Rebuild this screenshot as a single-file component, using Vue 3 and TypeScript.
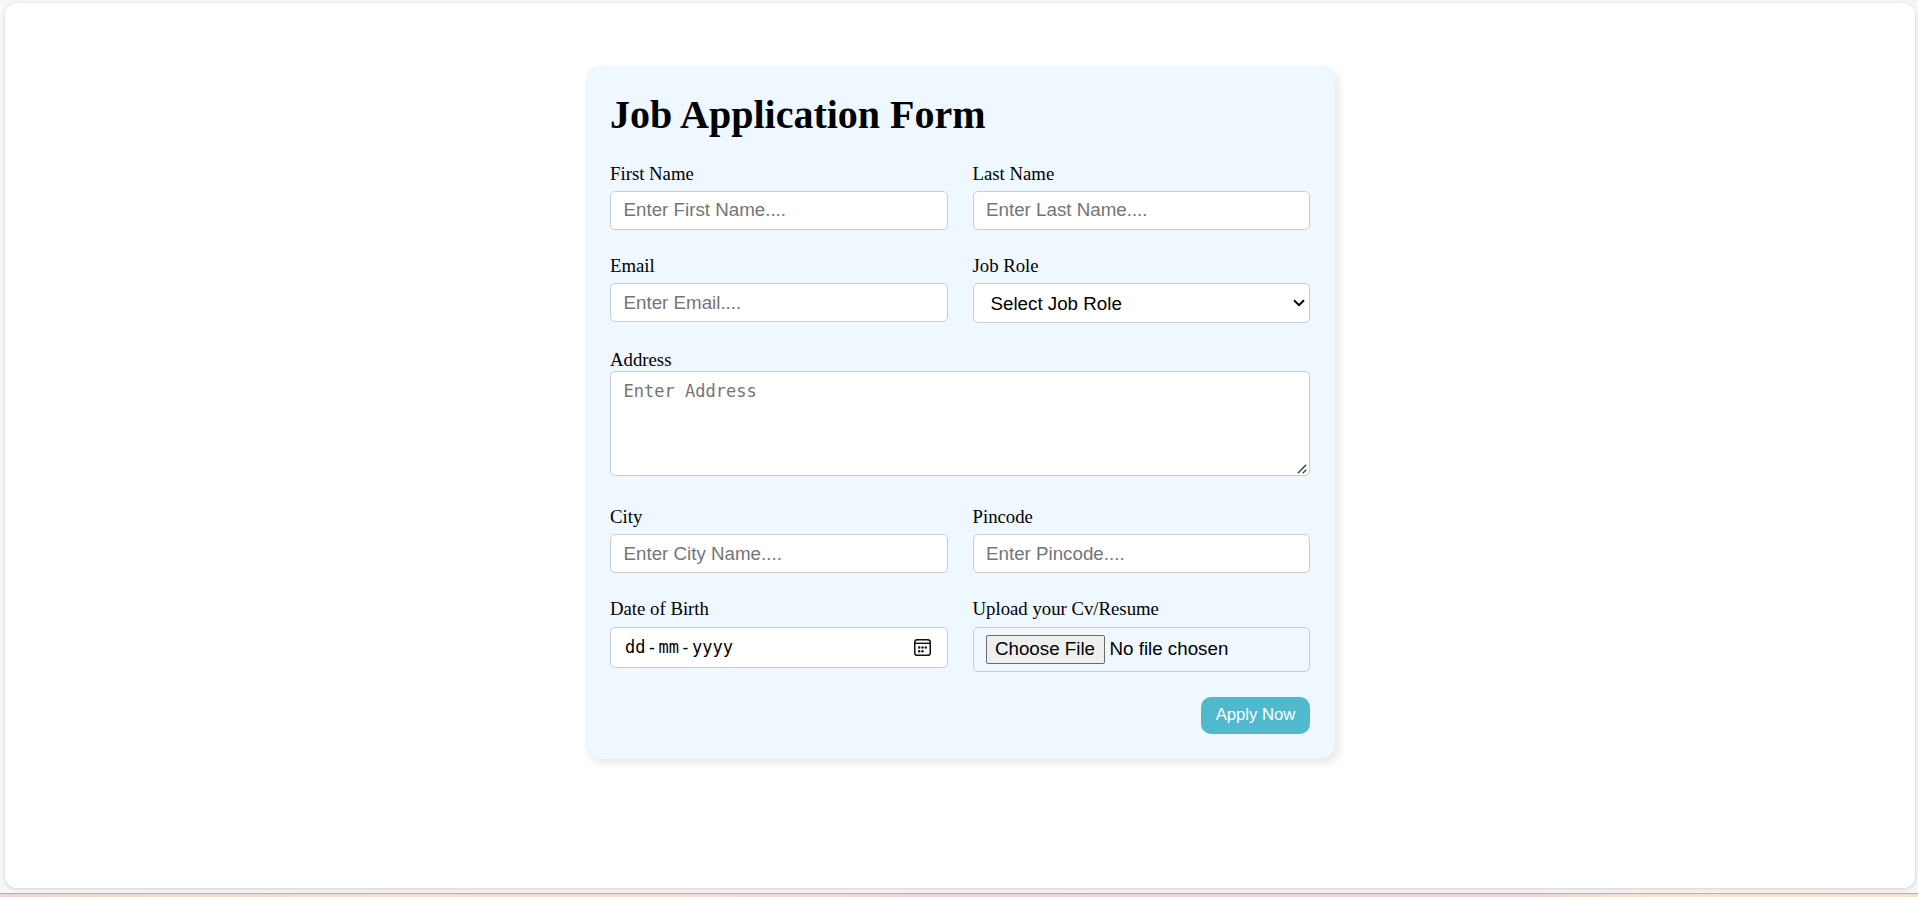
<script setup lang="ts">
import { ref } from 'vue'

const firstName = ref('')
const lastName = ref('')
const email = ref('')
const address = ref('')
const city = ref('')
const pincode = ref('')
</script>

<template>
  <div class="page">
    <main class="panel">
      <form class="card" @submit.prevent>
        <h1>Job Application Form</h1>

        <div class="row row-name">
          <div class="field">
            <label for="first">First Name</label>
            <input id="first" v-model="firstName" class="control" type="text" placeholder="Enter First Name...." />
          </div>
          <div class="field">
            <label for="last">Last Name</label>
            <input id="last" v-model="lastName" class="control" type="text" placeholder="Enter Last Name...." />
          </div>
        </div>

        <div class="row row-role">
          <div class="field">
            <label for="email">Email</label>
            <input id="email" v-model="email" class="control" type="text" placeholder="Enter Email...." />
          </div>
          <div class="field">
            <label>Job Role</label>
            <div class="control select" role="combobox" tabindex="0">
              <span>Select Job Role</span>
              <svg width="12" height="8" viewBox="0 0 12 8">
                <path d="M1 1.3 L6 6.2 L11 1.3" fill="none" stroke="#000" stroke-width="2" />
              </svg>
            </div>
          </div>
        </div>

        <div class="field address">
          <label for="address">Address</label>
          <div class="area-wrap">
            <textarea id="address" v-model="address" placeholder="Enter Address"></textarea>
            <svg class="grip" width="10" height="10" viewBox="0 0 10 10">
              <path d="M0.8 9.2 L9.2 0.8 M5.8 9.2 L9.2 5.8" fill="none" stroke="#444" stroke-width="1.5" />
            </svg>
          </div>
        </div>

        <div class="row">
          <div class="field">
            <label for="city">City</label>
            <input id="city" v-model="city" class="control" type="text" placeholder="Enter City Name...." />
          </div>
          <div class="field">
            <label for="pin">Pincode</label>
            <input id="pin" v-model="pincode" class="control" type="text" placeholder="Enter Pincode...." />
          </div>
        </div>

        <div class="row row-last">
          <div class="field">
            <label>Date of Birth</label>
            <div class="control date">
              <span class="date-text"><span>dd</span><i>-</i><span>mm</span><i>-</i><span>yyyy</span></span>
              <svg width="17" height="17" viewBox="0 0 17 17">
                <rect x="0.75" y="0.75" width="15.5" height="15.5" rx="2.6" fill="none" stroke="#111" stroke-width="1.5" />
                <path d="M1 4.3 H16" stroke="#111" stroke-width="1.4" />
                <g fill="#111">
                  <circle cx="5.2" cy="8.5" r="1.2" />
                  <circle cx="8.5" cy="8.5" r="1.2" />
                  <circle cx="11.8" cy="8.5" r="1.2" />
                  <circle cx="5.2" cy="12.2" r="1.2" />
                  <circle cx="8.5" cy="12.2" r="1.2" />
                </g>
              </svg>
            </div>
          </div>
          <div class="field">
            <label>Upload your Cv/Resume</label>
            <div class="control file">
              <button type="button" class="choose">Choose File</button>
              <span>No file chosen</span>
            </div>
          </div>
        </div>

        <div class="actions">
          <button type="submit" class="apply">Apply Now</button>
        </div>
      </form>
    </main>
    <div class="strip"></div>
  </div>
</template>

<style>
body {
  margin: 0;
  overflow: hidden;
}
</style>

<style scoped>
* {
  box-sizing: border-box;
}

.page {
  display: flex;
  flex-direction: column;
  height: 897px;
  padding-top: 3px;
  background: #f7f7f7;
  font-family: 'Liberation Serif', 'Times New Roman', serif;
  color: #000;
}

.panel {
  height: 885px;
  margin: 0 3px 5px 5px;
  padding: 63px 0 0 580px;
  border-radius: 12px;
  background: #fff;
  box-shadow: 0 1px 4px rgba(0, 0, 0, 0.16);
}

.strip {
  height: 4px;
  border-top: 1px solid #b5adab;
  background: linear-gradient(90deg, #edd8d2 0, #eedbca 7%, #f5dfd5 20%, #f4ded4 36%, #edd7d0 48%, #edd6cf 80%, #f6e5cf 86%, #f5e6cb 100%);
}

.card {
  width: 750px;
  height: 693px;
  padding: 25px;
  border-radius: 15px;
  background: #eff7ff;
  box-shadow: 4px 4px 8px rgba(0, 0, 0, 0.1);
}

h1 {
  height: 47px;
  margin: 0 0 25px;
  font-size: 40px;
  line-height: 47px;
  font-weight: 700;
  white-space: nowrap;
}

.row {
  display: grid;
  grid-template-columns: 1fr 1fr;
  gap: 25px;
  margin-bottom: 25px;
}

.row-role {
  margin-bottom: 26px;
}

.field {
  display: flex;
  flex-direction: column;
  align-items: stretch;
}

label {
  height: 21px;
  margin-bottom: 7px;
  font-size: 18.75px;
  line-height: 21px;
}

.control {
  width: 100%;
  height: 39px;
  padding: 0 12.5px;
  border: 1px solid #ccc;
  border-radius: 5px;
  background: #fff;
  font-family: 'Liberation Sans', Arial, sans-serif;
  font-size: 18.75px;
  color: #000;
}

input.control {
  padding: 1px 12.5px 0;
}

.row-name input.control {
  padding: 0 12.5px 1px;
}

.control::placeholder,
textarea::placeholder {
  color: #757575;
  opacity: 1;
}

.select {
  display: flex;
  align-items: center;
  justify-content: space-between;
  height: 40px;
  padding: 0 4px 0 17px;
}

.select span {
  padding-top: 2px;
}

.address {
  margin-bottom: 30px;
}

.address label {
  margin-bottom: 1px;
}

.area-wrap {
  position: relative;
  height: 105px;
}

textarea {
  display: block;
  width: 100%;
  height: 105px;
  padding: 8px 12.5px;
  border: 1px solid #ccc;
  border-radius: 5px;
  background: #fff;
  font-family: 'DejaVu Sans Mono', monospace;
  font-size: 17.05px;
  line-height: 22px;
  resize: none;
}

.grip {
  position: absolute;
  right: 3px;
  bottom: 2px;
}

.row-last label {
  margin-bottom: 8px;
}

.date {
  display: flex;
  align-items: center;
  justify-content: space-between;
  height: 41px;
  padding: 0 16px 0 14px;
}

.date-text {
  display: flex;
  padding-bottom: 2px;
  font-family: 'DejaVu Sans Mono', monospace;
  font-size: 17px;
}

.date-text i {
  width: 13px;
  text-align: center;
  font-style: normal;
}

.file {
  display: flex;
  align-items: center;
  gap: 5px;
  height: 45px;
  padding: 0 12px;
  background: transparent;
}

.choose {
  width: 119px;
  height: 29px;
  padding: 0 0 2px;
  border: 1px solid #6b6b6b;
  border-radius: 2px;
  background: #efefef;
  font: inherit;
  line-height: 25px;
  color: #000;
}

.file span {
  height: 25px;
  line-height: 23px;
}

.actions {
  display: flex;
  justify-content: flex-end;
}

.apply {
  width: 109px;
  height: 37px;
  padding: 0 0 2px;
  border: 0;
  border-radius: 10px;
  background: #50b9cd;
  font-family: 'Liberation Sans', Arial, sans-serif;
  font-size: 16.67px;
  color: #fff;
}
</style>
